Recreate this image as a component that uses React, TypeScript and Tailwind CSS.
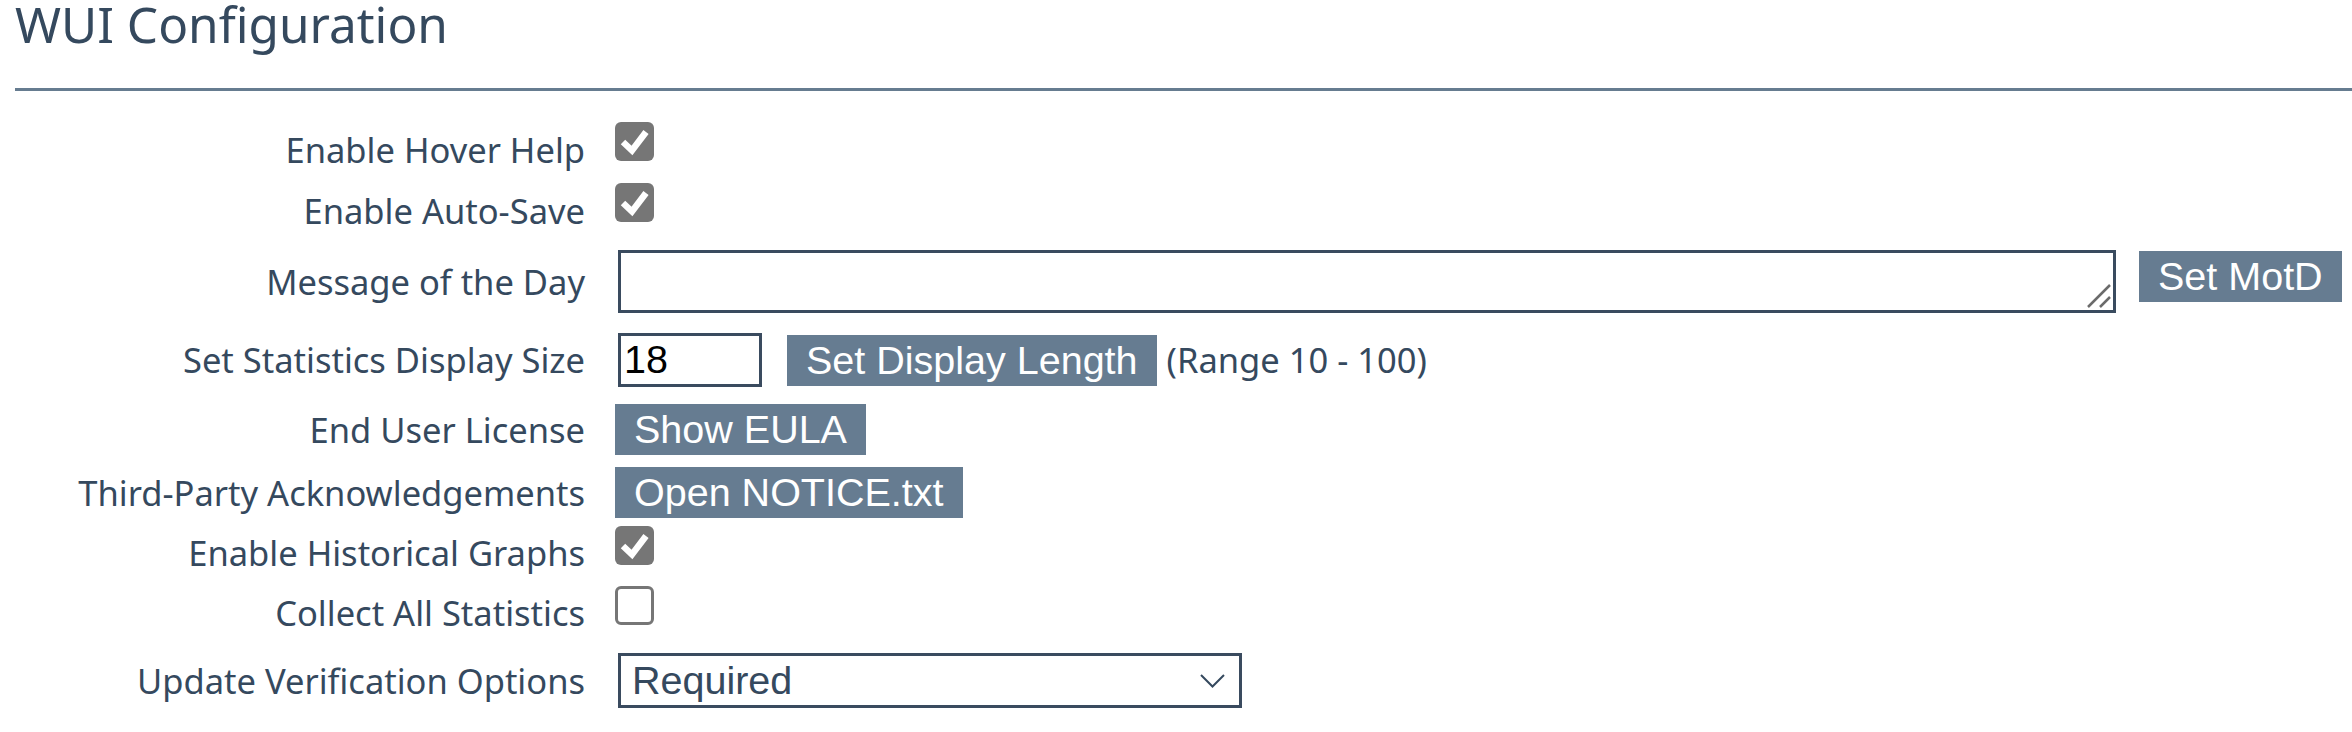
import React from "react";

const labelFont = "font-['Noto_Sans','Open_Sans',sans-serif]";
const btnFont = "font-['Liberation_Sans',Arial,sans-serif]";

const Checkbox = ({ checked }: { checked: boolean }) =>
  checked ? (
    <div className="mb-[8px] flex h-[39px] w-[39px] items-center justify-center rounded-[6px] bg-[#767676]">
      <svg width="39" height="39" viewBox="0 0 39 39">
        <path d="M8 20 L17 28.5 L31 10" fill="none" stroke="#fff" strokeWidth="6.5" strokeLinecap="butt" strokeLinejoin="miter" />
      </svg>
    </div>
  ) : (
    <div className="mb-[8px] h-[39px] w-[39px] rounded-[6px] border-[3px] border-[#767676] bg-white" />
  );

const Btn = ({ children, className = "" }: { children: React.ReactNode; className?: string }) => (
  <button
    className={`flex h-[51px] items-center bg-[#667c91] px-[19px] text-[39.5px] leading-[45px] text-white ${btnFont} ${className}`}
  >
    {children}
  </button>
);

const rows: { label: string; h: string; control: React.ReactNode; check?: boolean }[] = [
  { label: "Enable Hover Help", h: "h-[61px]", control: <Checkbox checked />, check: true },
  { label: "Enable Auto-Save", h: "h-[61px]", control: <Checkbox checked />, check: true },
  {
    label: "Message of the Day",
    h: "h-[89px]",
    control: (
      <div className="flex items-center">
        <div className="relative ml-[3px]">
          <textarea className="block h-[63px] w-[1498px] resize-none border-[3px] border-[#3a4b5f] bg-white outline-none" />
          <svg className="absolute right-[5px] bottom-[5px]" width="24" height="24" viewBox="0 0 24 24">
            <path d="M1 23 L23 1 M13 23 L23 13" stroke="#6b6b6b" strokeWidth="2.5" />
          </svg>
        </div>
        <Btn className="mb-[10px] ml-[23px]">Set MotD</Btn>
      </div>
    ),
  },
  {
    label: "Set Statistics Display Size",
    h: "h-[68px]",
    control: (
      <div className="flex items-center">
        <input
          defaultValue="18"
          className={`ml-[3px] h-[54px] w-[144px] border-[3px] border-[#3a4b5f] pl-[3px] text-[39.5px] text-black outline-none ${btnFont}`}
        />
        <Btn className="ml-[25px]">Set Display Length</Btn>
        <span className={`ml-[10px] text-[34.5px] ${labelFont}`}>(Range 10 - 100)</span>
      </div>
    ),
  },
  { label: "End User License", h: "h-[71px]", control: <Btn>Show EULA</Btn> },
  { label: "Third-Party Acknowledgements", h: "h-[55px]", control: <Btn>Open NOTICE.txt</Btn> },
  { label: "Enable Historical Graphs", h: "h-[58px]", control: <Checkbox checked />, check: true },
  { label: "Collect All Statistics", h: "h-[62px]", control: <Checkbox checked={false} />, check: true },
  {
    label: "Update Verification Options",
    h: "h-[81px]",
    control: (
      <div
        role="combobox"
        className={`ml-[3px] flex h-[55px] w-[624px] items-center justify-between border-[3px] border-[#3a4b5f] bg-white pr-[14px] pl-[11px] text-[39.5px] leading-[45px] text-[#35495e] ${btnFont}`}
      >
        <span>Required</span>
        <svg width="25" height="14" viewBox="0 0 25 14">
          <path d="M1 1 L12.5 12.5 L24 1" fill="none" stroke="#35495e" strokeWidth="2" />
        </svg>
      </div>
    ),
  },
];

export default function App() {
  return (
    <div className={`min-h-screen bg-white text-[#35495e] ${labelFont}`}>
      <h1 className="pl-[15px] text-[49.5px] leading-[48px] font-normal">WUI Configuration</h1>
      <div className="mt-[40px] ml-[15px] h-[3px] bg-[#667c90]" />
      <div className="mt-[24px] grid grid-cols-[585px_1fr] gap-x-[30px]">
        {rows.map((r) => (
          <React.Fragment key={r.label}>
            <div className={`flex items-center justify-end text-[34.5px] ${r.h} ${r.check ? "pt-[8px]" : ""}`}>
              {r.label}
            </div>
            <div className={`flex items-center ${r.h}`}>{r.control}</div>
          </React.Fragment>
        ))}
      </div>
    </div>
  );
}
